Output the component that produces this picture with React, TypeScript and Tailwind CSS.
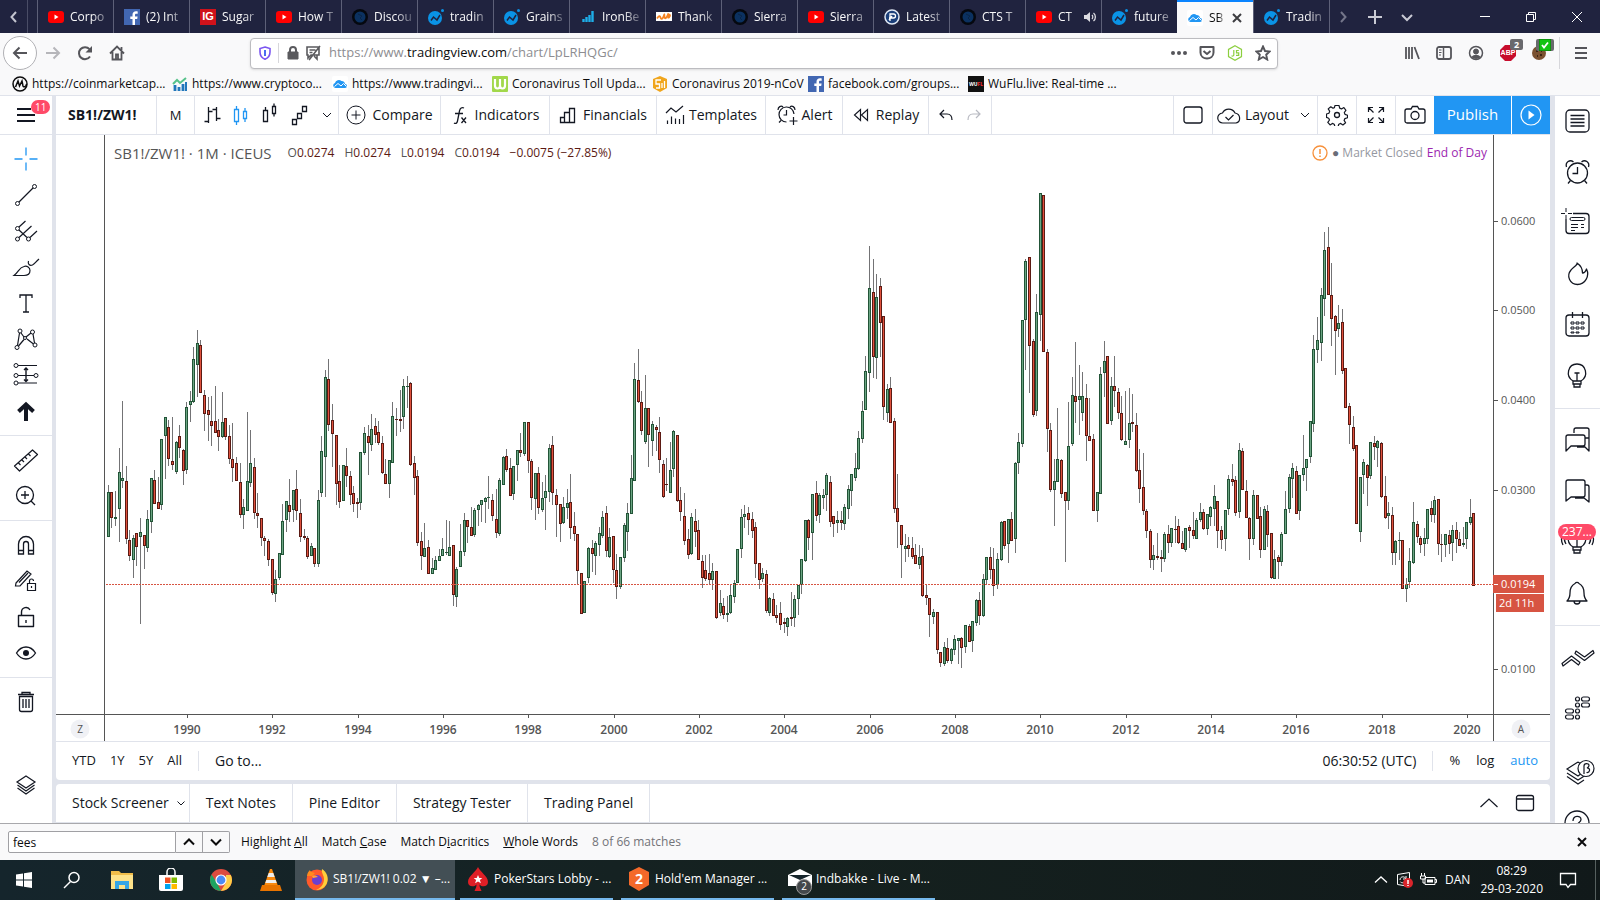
import { useState } from 'react';
import type { ReactNode } from 'react';

interface IconProps {
  size?: number;
  children: ReactNode;
  className?: string;
}

// Thin line icons, drawn on a square grid of `size` units
function Icon({ size = 28, children, className = '' }: IconProps) {
  return (
    <svg
      width={size}
      height={size}
      viewBox={`0 0 ${size} ${size}`}
      fill="none"
      stroke="currentColor"
      className={`shrink-0 ${className}`}
      aria-hidden="true"
    >
      {children}
    </svg>
  );
}

/* ---------- favicons ---------- */

const YouTubeIcon = () => (
  <Icon size={16}>
    <rect x="0" y="2" width="16" height="12" rx="3" fill="#f00" stroke="none" />
    <path d="M6.500 5.500v5l4-2.500z" fill="#fff" stroke="none" />
  </Icon>
);

const FacebookIcon = () => (
  <Icon size={16}>
    <rect width="16" height="16" fill="#4267b2" stroke="none" />
    <path d="M11 16V10h2.200l.4-2.500H11V6c0-.8.3-1.300 1.400-1.300h1.300V2.400C13.400 2.300 12.700 2.200 12 2.200 9.900 2.200 8.500 3.500 8.500 5.700v1.800H6.300V10h2.200v6z" fill="#fff" stroke="none" />
  </Icon>
);

const IgIcon = () => (
  <span className="flex size-4 shrink-0 items-center justify-center bg-[#d0121b] font-['Liberation_Sans',sans-serif] text-[11px] font-bold text-white">
    IG
  </span>
);

const OrbIcon = () => (
  <Icon size={16}>
    <circle cx="8" cy="8" r="8" fill="#05080f" stroke="none" />
    <circle cx="8" cy="8" r="5.500" fill="#0b3160" stroke="none" />
    <path d="M6 5l4 2-2 2 2 2" stroke="#0a2547" />
  </Icon>
);

const WaveIcon = () => (
  <Icon size={16}>
    <circle cx="7" cy="9" r="7" fill="#0a93e6" stroke="none" />
    <circle cx="14.500" cy="1.500" r="1.500" fill="#0a93e6" stroke="none" />
    <path d="M3 11.500l2.500-3.500 3.500 3L12 6" stroke="#20233f" strokeWidth="1.500" />
  </Icon>
);

const BarsIcon = () => (
  <Icon size={16}>
    <path d="M3.500 13v-3M6.500 13V8M9.500 13V6M12.500 13V2" stroke="#1eaee8" strokeWidth="2.400" />
  </Icon>
);

const OrangeIcon = () => (
  <Icon size={16}>
    <rect y="3" width="16" height="9" fill="#fff" stroke="none" />
    <path d="M1 9.500c2-3 3-3 3.500-1s2 2 3-1 1-3 1 0 2 2 3-1l1-2v5M12 7c2-2 3-1 1 1.500" stroke="#f58220" strokeWidth="1.800" />
  </Icon>
);

const SealIcon = () => (
  <Icon size={16}>
    <circle cx="8" cy="8" r="7" fill="#1b3f7a" stroke="#dfe7f3" strokeWidth="1.500" />
    <path d="M6 12V5h3.500a2 2 0 010 4H5M8 7l-3 4" stroke="#fff" strokeWidth="1.300" />
  </Icon>
);

const CloudIcon = () => (
  <Icon size={16}>
    <rect width="16" height="16" rx="2" fill="#fff" stroke="none" />
    <path d="M3.500 12a2.500 2.500 0 01-.5-4.900A4 4 0 019.500 5a3.500 3.500 0 013.500 3 2 2 0 010 4z" fill="#2196f3" stroke="none" />
    <path d="M2.500 10.500l3.500-3 3 2.500 2.500-2.500 3 3" stroke="#fff" />
  </Icon>
);

/* ---------- browser chrome ---------- */

const TABS = [
  { title: 'Corpo', icon: <YouTubeIcon /> },
  { title: '(2) Int', icon: <FacebookIcon /> },
  { title: 'Sugar', icon: <IgIcon /> },
  { title: 'How T', icon: <YouTubeIcon /> },
  { title: 'Discou', icon: <OrbIcon /> },
  { title: 'tradin', icon: <WaveIcon /> },
  { title: 'Grains', icon: <WaveIcon /> },
  { title: 'IronBe', icon: <BarsIcon /> },
  { title: 'Thank', icon: <OrangeIcon /> },
  { title: 'Sierra', icon: <OrbIcon /> },
  { title: 'Sierra', icon: <YouTubeIcon /> },
  { title: 'Latest', icon: <SealIcon /> },
  { title: 'CTS T', icon: <OrbIcon /> },
  { title: 'CT', icon: <YouTubeIcon />, audio: true },
  { title: 'future', icon: <WaveIcon /> },
  { title: 'SB', icon: <CloudIcon />, active: true },
  { title: 'Tradin', icon: <WaveIcon /> },
];

const FADE = '[mask-image:linear-gradient(to_right,black_55%,rgba(0,0,0,0.2))]';

function TabBar() {
  return (
    <header className="flex h-[33px] shrink-0 items-stretch bg-[#20233f] text-xs text-[#f9f9fa]">
      <button aria-label="Scroll tabs left" className="flex w-7 items-center justify-center border-r border-[#4a4d66]">
        <Icon size={16}><path d="M10 3L5.500 8l4.500 5" strokeWidth="2" stroke="#c3c4cf" /></Icon>
      </button>
      <div className="ml-[9px] flex min-w-0">
        {TABS.map((tab, i) => (
          <div
            key={i}
            className={`flex w-[76px] shrink-0 items-center gap-1.5 pl-2.5 ${
              tab.active
                ? 'border-t-2 border-[#0a84ff] bg-[#f9f9fa] pr-2.5 text-[#0c0c0d]'
                : 'border-l border-[#5d6078] pr-1'
            }`}
          >
            {tab.icon}
            <span className={`flex-1 whitespace-nowrap ${FADE}`}>{tab.title}</span>
            {tab.audio && (
              <Icon size={14}>
                <path d="M1 5h2.500L7 2v10L3.500 9H1z" fill="#dcdce2" stroke="none" />
                <path d="M9 5c1 1 1 3 0 4M10.500 3c2.500 2 2.500 6 0 8" stroke="#dcdce2" strokeWidth="1.300" />
              </Icon>
            )}
            {tab.active && (
              <button aria-label="Close tab">
                <Icon size={12}><path d="M2 2l8 8M10 2l-8 8" stroke="#3c3c40" strokeWidth="2" /></Icon>
              </button>
            )}
          </div>
        ))}
        <div className="border-l border-[#5d6078]" />
      </div>
      <div className="flex items-center gap-4 pl-[5px]">
        <button aria-label="Scroll tabs right"><Icon size={16}><path d="M6 3l4.500 5L6 13" strokeWidth="2" stroke="#74768a" /></Icon></button>
        <button aria-label="New tab"><Icon size={16}><path d="M8 1v14M1 8h14" strokeWidth="2" stroke="#c9cad4" /></Icon></button>
        <button aria-label="List all tabs"><Icon size={16}><path d="M3 6l5 5 5-5" strokeWidth="2" stroke="#c9cad4" /></Icon></button>
      </div>
      <div className="ml-auto flex items-center">
        <button aria-label="Minimize" className="flex w-[46px] justify-center"><Icon size={12}><path d="M1 5.500h10" stroke="#fff" /></Icon></button>
        <button aria-label="Restore" className="flex w-[46px] justify-center"><Icon size={12}><path d="M1.500 3.500h7v7h-7zM3.500 3.500v-2h7v7h-2" stroke="#fff" /></Icon></button>
        <button aria-label="Close" className="flex w-[46px] justify-center"><Icon size={12}><path d="M1 1l10 10M11 1L1 11" stroke="#fff" /></Icon></button>
      </div>
    </header>
  );
}

function NavBar() {
  return (
    <div className="flex h-10 shrink-0 items-center bg-[#f9f9fa] text-[#55555a]">
      <div className="flex w-[250px] items-center pl-[3px]">
        <button aria-label="Back" className="flex size-[34px] items-center justify-center rounded-full border border-[#b1b1b5] bg-white">
          <Icon size={16}><path d="M15 8H2M7.500 2.500L2 8l5.500 5.500" strokeWidth="2" /></Icon>
        </button>
        <button aria-label="Forward" className="ml-2 text-[#b6b6ba]"><Icon size={16}><path d="M1 8h13M8.500 2.500L14 8l-5.500 5.500" strokeWidth="2" /></Icon></button>
        <button aria-label="Reload" className="ml-4">
          <Icon size={16}>
            <path d="M13 11.500A6 6 0 1112.500 4.200" strokeWidth="2" />
            <path d="M15 1v6.500H8.500z" fill="currentColor" stroke="none" />
          </Icon>
        </button>
        <button aria-label="Home" className="ml-4">
          <Icon size={16}><path d="M1 8.500l7-7 7 7M3.500 7v7.500h9V7M7 14V9.500h2V14M12.500 2v3" strokeWidth="1.800" /></Icon>
        </button>
      </div>
      <div className="flex h-[31px] max-w-[1028px] flex-1 items-center rounded-sm border border-[#bcbcc0] bg-white pr-1.5 pl-[7px] shadow-sm">
        <Icon size={14}>
          <path d="M7 1l5 1.500V6c0 3.500-2 6-5 7.300C4 12 2 9.500 2 6V2.500z" stroke="#7a55f0" strokeWidth="1.600" />
          <path d="M7 4v6" stroke="#4b6cf2" strokeWidth="2" />
        </Icon>
        <div className="mx-1.5 h-5 w-px bg-[#d7d7db]" />
        <div className="flex items-center gap-1">
          <Icon size={16}><path d="M3 7h10v7H3z" fill="#5a5a5e" stroke="#5a5a5e" /><path d="M5 7V5a3 3 0 016 0v2" strokeWidth="2" stroke="#5a5a5e" /></Icon>
          <Icon size={16}><path d="M2 2h12v8H6l-3 3v-3H2zM4.500 5h6M4.500 7.500h3M15 1L4 15M12 10v4l-3-3" strokeWidth="1.600" stroke="#5a5a5e" /></Icon>
        </div>
        <label className="sr-only" htmlFor="url">Address</label>
        <div className="relative ml-2 min-w-0 flex-1 text-[13px] whitespace-nowrap text-[#8d8d91]">
          <input id="url" className="absolute inset-0 w-full bg-transparent outline-none" />
          https://www.<span className="text-[#0c0c0d]">tradingview.com</span>/chart/LpLRHQGc/
        </div>
        <div className="flex items-center gap-3">
          <button aria-label="Page actions"><Icon size={16}><circle cx="2" cy="8" r="2" fill="currentColor" stroke="none" /><circle cx="8" cy="8" r="2" fill="currentColor" stroke="none" /><circle cx="14" cy="8" r="2" fill="currentColor" stroke="none" /></Icon></button>
          <button aria-label="Save to Pocket"><Icon size={16}><path d="M1.500 2h13v5.500c0 8-13 8-13 0zM4.500 6l3.500 3 3.500-3" strokeWidth="2" strokeLinejoin="round" /></Icon></button>
          <button aria-label="JavaScript" className="text-[#8ccf3f]">
            <Icon size={16}><path d="M8 .7l6.500 3.700v7.200L8 15.300 1.500 11.600V4.400z" strokeWidth="1.200" /><path d="M6.800 5v5c0 1.200-1.500 1.200-2.300.8M11.800 5.500H9.500v2.300h2.200v2.500H9" strokeWidth="1.200" /></Icon>
          </button>
          <button aria-label="Bookmark page"><Icon size={16}><path d="M8 1.500l2 4.500 4.700.5-3.500 3.200 1 4.800L8 12l-4.200 2.500 1-4.800L1.300 6.500 6 6z" strokeWidth="1.900" /></Icon></button>
        </div>
      </div>
      <div className="ml-auto flex items-center gap-4 pr-[11px]">
        <button aria-label="Library"><Icon size={16}><path d="M2 2v12M5 2v12M8 2v12M10.500 2l4.500 12" strokeWidth="1.800" /></Icon></button>
        <button aria-label="Sidebars"><Icon size={16}><rect x="1" y="2" width="14" height="12" rx="2" strokeWidth="1.800" /><path d="M7.500 2v12" strokeWidth="1.500" /><path d="M3 5h2.500M3 7.500h2.500M3 10h2" /></Icon></button>
        <button aria-label="Account"><Icon size={16}><circle cx="8" cy="8" r="6.500" strokeWidth="1.500" /><circle cx="8" cy="6.500" r="2.500" fill="currentColor" /><path d="M3.500 12c2-3 7-3 9 0-2 2.500-7 2.500-9 0z" fill="currentColor" stroke="none" /></Icon></button>
        <button aria-label="Adblock Plus" className="relative flex size-4 items-center justify-center">
          <Icon size={16} className="absolute"><path d="M5 0h6l5 5v6l-5 5H5l-5-5V5z" fill="#c70d2c" stroke="none" /></Icon>
          <span className="relative font-['Liberation_Sans',sans-serif] text-[7px] font-bold text-white">ABP</span>
          <span className="absolute -top-1.5 left-2.5 rounded-xs bg-[#69696d] px-1 text-[9px] leading-[11px] font-bold text-white">2</span>
        </button>
        <button aria-label="Cookie manager" className="relative">
          <Icon size={16}><circle cx="7" cy="8" r="7" fill="#7b5231" stroke="none" /><path d="M4 6h2M8 10h2M5 11h1M9 6h1" stroke="#3d2614" strokeWidth="2" /></Icon>
          <span className="absolute -top-1.5 left-1 flex rounded-xs bg-[#69696d] px-[3px]">
            <Icon size={12}><rect width="12" height="12" fill="#12c412" stroke="#0a6b0a" /><path d="M3 6l2 2.500 4-5" stroke="#fff" strokeWidth="1.800" /></Icon>
          </span>
        </button>
        <div className="-mr-[3px] -ml-[5px] h-8 w-px bg-[#d7d7db]" />
        <button aria-label="Menu"><Icon size={16}><path d="M2 3h12M2 8h12M2 13h12" strokeWidth="2" /></Icon></button>
      </div>
    </div>
  );
}

const BOOKMARKS = [
  {
    label: 'https://coinmarketcap...',
    icon: <Icon size={16}><circle cx="8" cy="8" r="7" strokeWidth="1.500" /><path d="M3.500 11l2.500-6 1.500 5 2.500-5 1 5c.5 1.500 3 1 3.500-2" strokeWidth="1.500" /></Icon>,
  },
  {
    label: 'https://www.cryptoco...',
    icon: <Icon size={16}><path d="M3 15V9M7 15v-4M11 15V8" stroke="#2277bb" strokeWidth="2.800" /><path d="M14 15V6" stroke="#2277bb" strokeWidth="2" /><path d="M1 8l4-4 3 3 6-5" stroke="#56c28a" strokeWidth="2" /></Icon>,
  },
  { label: 'https://www.tradingvi...', icon: <CloudIcon /> },
  {
    label: 'Coronavirus Toll Upda...',
    icon: <Icon size={16}><rect width="16" height="16" rx="1" fill="#a2d84b" stroke="none" /><path d="M3 3v6.500c0 4 5 4 5 0V3v6.500c0 4 5 4 5 0V3" stroke="#fff" strokeWidth="2.200" /></Icon>,
  },
  {
    label: 'Coronavirus 2019-nCoV',
    icon: <Icon size={16}><path d="M8 0l7 3v9l-7 4-7-4V3z" fill="#f0a51c" stroke="none" /><path d="M9 4H4v4h3.500v4H4M10 7v5M12.500 5v7" stroke="#fff" strokeWidth="1.300" /></Icon>,
    narrow: true,
  },
  { label: 'facebook.com/groups...', icon: <FacebookIcon /> },
  {
    label: 'WuFlu.live: Real-time ...',
    icon: (
      <span className="flex size-4 shrink-0 items-center justify-center bg-[#111] text-[5px] font-bold text-white">
        WU<span className="text-red-500">FL</span>
      </span>
    ),
  },
];

function BookmarksBar() {
  return (
    <nav className="flex h-[23px] shrink-0 items-center border-b border-[#e0e3eb] bg-[#f9f9fa] text-xs text-[#0c0c0d]">
      {BOOKMARKS.map((b) => (
        <a key={b.label} href="#" className={`flex shrink-0 items-center gap-1 pl-3 whitespace-nowrap ${b.narrow ? 'w-39' : 'w-40'}`}>
          {b.icon}
          {b.label}
        </a>
      ))}
    </nav>
  );
}

/* ---------- trading toolbar ---------- */

const CELL = 'flex shrink-0 items-center justify-center border-r border-[#e0e3eb]';

function ChartToolbar() {
  return (
    <div className="flex h-[39px] shrink-0 items-stretch border-b border-[#e0e3eb] bg-white text-sm whitespace-nowrap">
      <button className={`${CELL} w-[101px] font-bold`}><span className="flex-1 pl-3 text-left">SB1!/ZW1!</span></button>
      <button className={`${CELL} w-[38px] text-[13px]`}>M</button>
      <div className={`${CELL} w-36`}>
        <button aria-label="Bars"><Icon><path d="M9.500 6v16M5.500 20.500h4M9.500 10.500h4M17.500 6v14M13.500 8.500h4M17.500 17.500h4" strokeWidth="1.300" /></Icon></button>
        <button aria-label="Candles" className="text-[#2196f3]"><Icon><path d="M7.500 8.500h4v12h-4zM9.500 5v3.500M9.500 20.500V24M16.500 10.500h3v7h-3zM18 7v3.500M18 17.500V21" strokeWidth="1.300" /></Icon></button>
        <button aria-label="Hollow candles"><Icon><path d="M8.500 9.500h4v11h-4zM10.500 6v3.500M17.500 5.500h3v7h-3zM19 2.500v3M19 12.500v3" strokeWidth="1.300" /></Icon></button>
        <button aria-label="Renko"><Icon><path d="M9.500 18.500h4v5h-4zM14.500 12.500h4v5h-4zM19.500 5.500h4v5h-4z" strokeWidth="1.300" /></Icon></button>
        <button aria-label="More chart types" className="ml-2"><Icon size={16}><path d="M4 6l4 4 4-4" /></Icon></button>
      </div>
      <button className={`${CELL} w-[102px] gap-1.5`}>
        <Icon size={20}><circle cx="10" cy="10" r="9" /><path d="M10 5.500v9M5.500 10h9" /></Icon>
        Compare
      </button>
      <button className={`${CELL} w-[109px] gap-1.5`}>
        <Icon size={18}><path d="M13 2c-2-1-4 0-4.500 3L6.500 15c-.5 2.500-2 3-3.500 2M4 7.500h8M10.500 11.500l4.500 5.500M15 11.500L10.500 17" strokeWidth="1.300" /></Icon>
        Indicators
      </button>
      <button className={`${CELL} w-[107px] gap-1.5`}>
        <Icon size={18}><path d="M1.500 11.500h4v5h-4zM5.500 6.500h5v10h-5zM10.500 2.500h5v14h-5z" strokeWidth="1.300" /></Icon>
        Financials
      </button>
      <button className={`${CELL} w-[109px] gap-1`}>
        <Icon size={20}><path d="M1 8l5-5 5 4 7-6M2.500 15.500V19M6.500 11.500V19M10.500 13.500V19M14.500 14v5M18.500 10v9" strokeWidth="1.200" /></Icon>
        Templates
      </button>
      <button className={`${CELL} w-[77px] gap-1`}>
        <Icon size={22}><path d="M18 10A7.500 7.500 0 1010.500 18M10.500 6v5h-3M2 6c0-3 3-5 5-3M19 6c0-3-3-5-5-3M5 16.500l-2 2M17.500 13v8M13.500 17h8" strokeWidth="1.200" /></Icon>
        Alert
      </button>
      <button className={`${CELL} w-[86px] gap-1.5`}>
        <Icon size={18}><path d="M8.500 3.500v11l-6-5.500zM15.500 3.500v11l-6-5.500z" strokeWidth="1.200" /></Icon>
        Replay
      </button>
      <div className={`${CELL} w-[63px] gap-3`}>
        <button aria-label="Undo"><Icon size={16}><path d="M6 3L2 7l4 4M2 7h7c3 0 5 2 5 6" strokeWidth="1.200" /></Icon></button>
        <button aria-label="Redo" className="text-[#b8bac2]"><Icon size={16}><path d="M10 3l4 4-4 4M14 7H7c-3 0-5 2-5 6" strokeWidth="1.200" /></Icon></button>
      </div>
      <div className="ml-auto flex border-l border-[#e0e3eb]">
        <button aria-label="Select layout" className={`${CELL} w-[39px]`}><Icon size={20}><rect x="1" y="2" width="18" height="16" rx="2.500" strokeWidth="1.300" /></Icon></button>
        <button className={`${CELL} w-[105px] gap-1`}>
          <Icon size={24}><path d="M6 20a5 5 0 01-.5-10A7 7 0 0118 10c6 1 6 9 1 10zM8.500 14l3 3 5-5" strokeWidth="1.200" /></Icon>
          Layout
          <Icon size={16} className="ml-1"><path d="M4 6l4 4 4-4" /></Icon>
        </button>
        <button aria-label="Settings" className={`${CELL} w-[39px]`}>
          <Icon size={22}><path d="M9 1.500h4l.7 2.600 1.800.8 2.400-1.400 2 2.800-1.600 2.200.7 1.900 2.500.8v2.600l-2.600.8-.8 1.800 1.500 2.400-2.700 2.200-2.200-1.600-1.900.8-.8 2.600H9l-.8-2.600-1.800-.8-2.300 1.500-2.300-2.600 1.700-2.300-.8-1.800-2.200-.8V10l2.400-.8.8-1.900-1.500-2.400 2.600-2.100 2.200 1.400 1.400-.6z" strokeWidth="1.200" strokeLinejoin="round" /><circle cx="11" cy="11" r="2.500" strokeWidth="1.300" /></Icon>
        </button>
        <button aria-label="Fullscreen" className={`${CELL} w-[39px]`}>
          <Icon size={20}><path d="M2.500 7V2.500H7M2.500 2.500L7.500 7.500M13 2.500h4.500V7M17.500 2.500l-5 5M2.500 13v4.500H7M2.500 17.500l5-5M17.500 13v4.500H13M17.500 17.500l-5-5" strokeWidth="1.200" /></Icon>
        </button>
        <button aria-label="Take a snapshot" className="flex w-[38px] items-center justify-center">
          <Icon size={22}><path d="M3 5h4l1.500-2.500h5L15 5h4a2 2 0 012 2v10a2 2 0 01-2 2H3a2 2 0 01-2-2V7a2 2 0 012-2z" strokeWidth="1.300" /><circle cx="11" cy="11.500" r="4" strokeWidth="1.300" /></Icon>
        </button>
        <button className="w-[78px] border-r border-white bg-[#2196f3] text-[15px] text-white">Publish</button>
        <button aria-label="Play" className="flex w-[38px] items-center justify-center bg-[#2196f3] text-white">
          <Icon size={22}><circle cx="11" cy="11" r="10" strokeWidth="1.200" /><path d="M8.500 6.500v9L14.500 11z" fill="currentColor" stroke="none" /></Icon>
        </button>
      </div>
    </div>
  );
}

const DRAW_TOOLS = [
  { name: 'Crosshair', active: true, art: <path d="M14 2.500v8M14 17.500v8M2.500 14h8M17.500 14h8" strokeWidth="1.300" /> },
  { name: 'Trend line', art: <><circle cx="5.500" cy="22.500" r="2" /><circle cx="22.500" cy="5.500" r="2" /><path d="M7 21L21 7" strokeWidth="1.200" /></> },
  { name: 'Pitchfork', art: <><circle cx="5.500" cy="11.500" r="2" /><circle cx="5.500" cy="22" r="2" /><circle cx="16.500" cy="22" r="2" /><path d="M7 10l6.500-6M7 20.500L19.500 9M18 20.500l7-6.500M7 13l8 7.500" strokeWidth="1.200" /></> },
  { name: 'Brush', art: <path d="M2 22.500h10c4 0 6-2 6-5s-3-5-6-4c-5 1-5 5-10 9zM16.500 8c-1 3 1 5 4 4 2-.7 3-3 6.500-6" strokeWidth="1.200" /> },
  { name: 'Text', art: <path d="M8 9V6h12v3M14 6v17M11 23h6" strokeWidth="1.300" /> },
  { name: 'Pattern', art: <><circle cx="8" cy="6" r="2" /><circle cx="20.500" cy="7" r="2" /><circle cx="5" cy="22.500" r="2" /><circle cx="23" cy="20" r="2" /><circle cx="13" cy="13" r="1.500" /><path d="M7.500 8L5.500 20.500M9 8l3 4M14 12l5-4M12 14.500l-5.500 6.500M15 14l6.500 5M21 9l1.500 9" strokeWidth="1.200" /></> },
  { name: 'Forecast', art: <><circle cx="4" cy="4.500" r="2" /><circle cx="24" cy="14.500" r="2" /><circle cx="4" cy="14.500" r="2" /><circle cx="4" cy="22" r="2" /><path d="M6 4.500h19M6 14.500h16M6 22h19" strokeWidth="1.200" /><path d="M14 7.500v13M12 9l2-2 2 2M12 18.500l2 2 2-2" strokeWidth="1.400" /></> },
  { name: 'Arrow', art: <path d="M14 24V8M6.500 14.500L14 7.500l7.500 7" strokeWidth="4" /> },
];

const MEASURE_TOOLS = [
  { name: 'Measure', art: <path d="M2.500 20L20.500 4l5 4.500L7.500 25zM6.500 17l2 2M10 14l2 2M13 11l2 2M16.500 8l2 2" strokeWidth="1.200" strokeLinejoin="round" /> },
  { name: 'Zoom in', art: <><circle cx="13" cy="13" r="8.500" strokeWidth="1.300" /><path d="M13 9v8M9 13h8M19 19l4 4" strokeWidth="1.300" /></> },
];

const LOCK_TOOLS = [
  { name: 'Magnet', art: <path d="M6.500 23V13a7.500 7.500 0 0115 0v10h-5V13a2.500 2.500 0 00-5 0v10zM6.500 19.500h5M16.500 19.500h5" strokeWidth="1.300" /> },
  { name: 'Stay in drawing mode', art: <path d="M4 16L15 4l4 3L8 19H3.500zM7 15.500l9-9.500M15.500 16.500h8v7h-8zM17.500 16.500v-2.500a2 2 0 014 0M19.500 19v2" strokeWidth="1.200" /> },
  { name: 'Lock all drawings', art: <path d="M6.500 12.500h15v11h-15zM9.500 12.500V9a4.500 4.500 0 018.500-2M14 17v3" strokeWidth="1.400" strokeLinejoin="round" /> },
  { name: 'Hide all drawings', art: <><path d="M4.500 14c5-8 14-8 19 0-5 8-14 8-19 0z" strokeWidth="1.300" /><circle cx="14" cy="14" r="3" fill="currentColor" stroke="none" /></> },
];

const LAYERS_ART = <path d="M14 5l9 6-9 6-9-6zM5.500 14l8.500 6 8.500-6M5.500 17l8.500 6 8.500-6" strokeWidth="1.200" />;

interface Tool {
  name: string;
  art: ReactNode;
  active?: boolean;
}

function ToolGroup({ tools }: { tools: Tool[] }) {
  return (
    <div className="flex flex-col border-b border-[#e0e3eb] py-1.5">
      {tools.map((tool) => (
        <button
          key={tool.name}
          aria-label={tool.name}
          className={`flex h-9 items-center justify-center ${tool.active ? 'text-[#2196f3]' : ''}`}
        >
          <Icon>{tool.art}</Icon>
        </button>
      ))}
    </div>
  );
}

function LeftSidebar() {
  return (
    <aside className="flex w-[52px] shrink-0 flex-col bg-white">
      <button aria-label="Open menu" className="relative flex h-[39px] items-center justify-center border-b border-[#e0e3eb]">
        <Icon size={20}><path d="M1 4h14M1 10h18M1 16h18" strokeWidth="2" /></Icon>
        <span className="absolute top-1 left-[31px] rounded-full bg-[#ff4a68] px-1 text-[10px] leading-3.5 text-white">11</span>
      </button>
      <ToolGroup tools={DRAW_TOOLS} />
      <ToolGroup tools={MEASURE_TOOLS} />
      <ToolGroup tools={LOCK_TOOLS} />
      <div className="flex flex-1 flex-col justify-between pt-1.5 pb-5">
        <button aria-label="Remove drawings" className="flex h-9 items-center justify-center">
          <Icon><path d="M7.500 8.500h13v13a2 2 0 01-2 2h-9a2 2 0 01-2-2zM6 6.500h16M10 6V4.500h8V6M11 11v9M14 11v9M17 11v9" strokeWidth="1.300" /></Icon>
        </button>
        <button aria-label="Object tree" className="flex h-9 items-center justify-center"><Icon>{LAYERS_ART}</Icon></button>
      </div>
    </aside>
  );
}

const PANEL_TOP: Tool[] = [
  { name: 'Watchlist', art: <><rect x="4" y="4" width="23" height="22" rx="4" strokeWidth="1.300" /><path d="M8.500 9.500h14M8.500 13h14M8.500 16.500h14M8.500 20h14" strokeWidth="1.300" /></> },
  { name: 'Alerts', art: <><circle cx="15.500" cy="16" r="10" strokeWidth="1.300" /><path d="M15.500 10v6.500h-5M4.500 10C3 5 8 2 11.500 5M26.500 10C28 5 23 2 19.500 5M8.500 23.500L6 26.500M22.500 23.500l2.500 3" strokeWidth="1.300" /></> },
  { name: 'Data window', art: <><path d="M11 5.500h13a3 3 0 013 3v14a3 3 0 01-3 3H7a3 3 0 01-3-3V11" strokeWidth="1.300" /><path d="M4 0v4M4 7v4M-1 5.500h4M6 5.500h4" /><rect x="8" y="9.500" width="15" height="3" rx="1.500" /><path d="M9 16.500h7M19 16.500h3M9 19.500h7M19 19.500h3M9 22.500h4" strokeWidth="1.200" /></> },
  { name: 'Hotlists', art: <path d="M15 4c1 2-4 4-6 7-5 6-1 14.500 6.500 14.500S28 17 24.500 10c-1 3-3 4-4 4 0-4-1-7-5.500-10z" strokeWidth="1.300" strokeLinejoin="round" /> },
  { name: 'Calendar', art: <><rect x="4" y="5" width="23" height="21" rx="3" strokeWidth="1.300" /><path d="M10.500 2v6M20.500 2v6" strokeWidth="1.300" /><path d="M9 12h3v2H9zM14 12h3v2h-3zM19 12h3v2h-3zM9 17h3v2H9zM14 17h3v2h-3zM19 17h3v2h-3zM9 22h3v1H9zM14 22h3v1h-3z" strokeLinejoin="round" /></> },
  { name: 'Ideas', art: <path d="M11 20c-8-5-5-17 4-17s12 12 4 17zM11 20v3h8v-3M12 23v3h6v-3M12.500 12h5M15 12v8" strokeWidth="1.300" /> },
];

const PANEL_MIDDLE: Tool[] = [
  { name: 'Public chats', art: <path d="M12 8V5a2 2 0 012-2h11a2 2 0 012 2v21l-4-4h-8M4 12a2 2 0 012-2h15a2 2 0 012 2v7a2 2 0 01-2 2H9l-5 5zM23 13h4" strokeWidth="1.300" strokeLinejoin="round" /> },
  { name: 'Private chats', art: <path d="M4 6a2 2 0 012-2h15a2 2 0 012 2v13a2 2 0 01-2 2H9l-5 4zM23 9h2a2 2 0 012 2v15l-5-4h-9" strokeWidth="1.300" strokeLinejoin="round" /> },
  { name: 'Ideas stream', art: <path d="M11 20c-8-5-5-17 4-17s12 12 4 17zM11 20v3h8v-3M12 23v3h6v-3M12.500 12h5M15 12v8M4 17c-2-3-2-6 0-9M1 18c-2-4-2-8 0-11M27 17c2-3 2-6 0-9M30 18c2-4 2-8 0-11" strokeWidth="1.300" /> },
  { name: 'Notifications', art: <path d="M5 23h20c-2-2-3-4-3-8 0-5-2-8-5-9.500-1-1.500-3-1.500-4 0C10 7 8 10 8 15c0 4-1 6-3 8zM12 23c0 4 6 4 6 0" strokeWidth="1.300" strokeLinejoin="round" /> },
];

const PANEL_BOTTOM: Tool[] = [
  { name: 'Order panel', art: <path d="M0 21.500L9.500 14l8.500 6.500-1.500 2.500-7-5.500L1 24zM14 9l8.500 6L31 8.500l1 2.500-9.500 7.500-9.500-7z" strokeWidth="1.200" strokeLinejoin="round" /> },
  {
    name: 'DOM',
    art: (
      <g strokeWidth="1.200">
        <rect x="19.500" y="4" width="8" height="4" rx="2" />
        <rect x="19.500" y="10" width="8" height="4" rx="2" />
        <rect x="13.500" y="4" width="4" height="4" rx="2" />
        <rect x="13.500" y="10" width="4" height="4" rx="2" />
        <rect x="13.500" y="16" width="4" height="4" rx="2" />
        <rect x="13.500" y="22" width="4" height="4" rx="2" />
        <rect x="3.500" y="16" width="8" height="4" rx="2" />
        <rect x="3.500" y="22" width="8" height="4" rx="2" />
      </g>
    ),
  },
];

function PanelButton({ tool }: { tool: Tool }) {
  return (
    <button aria-label={tool.name} className="flex h-[51px] shrink-0 items-center justify-center pr-0.5 pb-0.5">
      <Icon size={30} className="overflow-visible">{tool.art}</Icon>
    </button>
  );
}

function RightSidebar() {
  return (
    <aside className="flex w-[45px] shrink-0 flex-col overflow-hidden bg-white">
      <div className="flex shrink-0 flex-col border-b border-[#e0e3eb] pb-1.5">
        {PANEL_TOP.map((t) => <PanelButton key={t.name} tool={t} />)}
      </div>
      <div className="relative flex shrink-0 flex-col border-b border-[#e0e3eb] py-1.5">
        {PANEL_MIDDLE.map((t) => <PanelButton key={t.name} tool={t} />)}
        <span className="absolute top-[115px] right-1 rounded-full bg-[#ff4a68] px-1 text-[12px] leading-4 text-white">237...</span>
      </div>
      <div className="flex shrink-0 flex-col pt-1.5">
        {PANEL_BOTTOM.map((t) => <PanelButton key={t.name} tool={t} />)}
      </div>
      <div className="mt-3 flex flex-col">
        <PanelButton tool={{
          name: 'Object tree',
          art: <><path d="M16 6L5 13l11 7 4-3M5 17l11 7 8-5M5 20.500L16 28l6-4M16 6l3 2" strokeWidth="1.200" /><circle cx="24" cy="12.500" r="8" strokeWidth="1.200" fill="#fff" /><path d="M22 18v-8c0-3 5-3 5-.5 0 1.500-1 2-2 2.500 4 0 3 5-.5 4.500" strokeWidth="1.200" /></>,
        }} />
        <PanelButton tool={{
          name: 'Help',
          art: <><circle cx="15" cy="16" r="12" strokeWidth="1.300" /><path d="M11 14c0-6 8-6 8-1.500 0 3-4 3-4 6.500M15 21v2" strokeWidth="1.300" /></>,
        }} />
      </div>
    </aside>
  );
}

/* ---------- price chart ---------- */

// Each segment keeps its candles relative to its own origin, in thirds of a unit:
// direction + x, high, body top, body bottom, low
const SEGMENTS = [
  {
    x: 100,
    y: 310,
    bars: `u25 525 546 681 681,d34 546 546 624 654,u46 543 621 627 648,u58 414 486 597 696,u67 273 504 513 534,d79 468 513 687 702,
d88 660 690 738 753,u100 675 684 750 804,d109 669 669 711 768,u121 624 666 681 942,d133 675 675 708 777,u142 600 627 714 726,
u154 504 504 636 669,d163 480 510 582 582,d175 501 576 597 597,u184 387 387 585 600,u196 321 321 378 507,d205 330 351 447 468,
d217 321 453 465 480,u229 393 396 486 492,d238 345 378 414 444,d250 417 420 483 525,u259 276 291 480 492,u271 243 273 285 336,
u280 111 147 276 279,u292 60 99 165 261,d301 90 105 249 249,d313 240 255 312 363,d325 261 300 315 393,d334 258 333 348 408,
d346 228 333 369 369,d355 327 360 381 423,u367 246 336 381 384,d376 324 324 381 390,d388 345 378 447 462,d397 339 447 474 516,
d409 441 459 513 513,d421 459 516 615 624,u430 567 591 615 657,u442 306 513 603 603,u451 360 459 519 531,d463 444 471 609 627,
d472 549 609 618 654,d484 624 624 684 708,d493 678 684 693 738,d505 687 693 750 768,d517 747 747 849 855,u526 780 807 852 876,
u538 729 729 804 810,u547 582 633 735 735,u559 573 573 630 666,d568 507 585 606 636,u580 540 540 600 636,d589 480 537 603 630,
d601 567 609 681 696,d613 657 678 684 690,d622 678 684 741 747,u634 699 708 738 738,d643 714 714 762 771,u655 540 570 762 771,
u664 378 423 549 561,u676 180 201 441 561,d685 147 207 345 363,d697 282 330 372 471,d709 375 375 522 585,d718 465 513 576 594,
u730 465 465 573 573,d739 414 468 498 531,d751 483 498 555 585,d760 528 549 582 606,d772 564 576 582 624,u781 426 426 579 600,
u793 351 369 429 435,d805 345 378 399 495,u814 312 357 405 423,d826 324 348 375 399,d835 333 366 399 405,d847 378 399 489 492,
d856 447 492 522 522,u868 450 450 522 564,u877 276 318 459 459,d889 294 327 330 378,d901 240 327 333 366,u910 207 228 321 357,
u922 198 228 231 294,d931 216 219 465 468,d943 438 459 504 555,d952 480 498 699 708,d964 666 693 738 780,u973 639 714 741 741,
d985 690 711 792 792,u997 744 774 792 792,u1006 738 750 780 780,u1018 717 738 753 753,u1027 684 717 738 738,u1039 630 726 729 735,
u1048 633 711 738 738,d1060 705 705 855 888,u1069 771 777 861 891,u1081 642 723 771 771,u1093 609 630 726 738,d1102 630 630 651 699,
d1114 591 651 678 678,u1123 594 600 675 681,u1135 582 585 600 648,u1144 570 570 585 636`,
  },
  {
    x: 480,
    y: 310,
    bars: `u16 561 564 576 639,u25 498 561 564 597,d37 552 570 618 633,d49 537 627 669 684,u58 504 510 672 678,u70 438 441 525 525,
d79 417 438 480 486,d91 444 474 558 558,u100 468 468 552 570,u112 420 420 465 513,d121 369 420 429 441,u133 336 336 432 438,
d145 336 336 453 489,d154 447 453 564 600,u166 489 489 567 630,d175 471 489 594 612,u187 516 564 600 606,u196 495 543 564 660,
u208 402 414 546 576,d217 378 405 549 585,d229 537 555 585 681,d241 582 582 642 696,u250 561 591 639 642,u262 537 579 594 627,
d271 492 576 654 687,d283 606 648 672 693,d292 672 672 783 825,d304 789 789 912 912,u313 813 813 909 909,u325 711 714 804 819,
d337 690 714 732 786,u346 693 699 738 795,u358 651 669 705 738,u367 603 621 678 684,d379 588 609 723 741,u388 654 681 741 744,
d400 678 678 780 819,d409 732 780 831 867,u421 741 741 831 837,u433 639 645 744 756,u442 579 609 666 723,u454 435 504 612 612,
u463 159 207 513 513,d475 117 210 276 279,d484 243 276 363 375,u496 195 294 396 402,d505 294 294 375 471,u517 333 342 393 438,
d529 345 351 360 423,d538 321 366 450 489,d550 450 462 561 564,d559 444 522 525 543,u571 396 480 549 549,u580 360 363 477 501,
d592 375 375 573 576,d601 531 570 606 633,d613 549 618 693 705,d625 657 687 735 747,u634 609 621 732 735,d646 597 633 666 711,
d655 630 660 750 750,d667 735 753 804 834,d676 735 780 807 813,d688 732 789 810 822,u697 759 783 810 840,d709 783 783 924 927,
u721 840 879 909 918,d730 864 888 915 927,u742 858 909 915 936,u751 825 855 909 912,u763 810 819 861 879,u772 717 717 819 819,
u784 597 621 717 744,u793 585 612 621 654,d805 591 609 630 675,d817 606 627 663 684,d826 636 651 762 804,d838 759 759 810 837,
u847 774 789 807 816,d859 780 792 903 909,u868 861 864 909 918,d880 849 867 918 918,d889 885 915 924 939,d901 876 909 945 960,
d913 924 936 942 969,u922 921 924 951 978,d934 846 921 927 948,u943 855 867 924 951,u955 825 825 867 915,u964 747 747 825 852,
u976 630 630 753 756,d985 627 630 684 720,u997 552 552 669 750,d1009 513 549 618 633,u1018 549 555 615 639,u1030 537 555 564 597,
u1039 489 495 555 603,d1051 498 516 636 651,d1060 618 618 642 681,u1072 603 630 639 669,d1084 603 630 639 660,u1093 582 591 642 660,
u1105 525 537 597 627,u1114 492 492 543 588`,
  },
  {
    x: 850,
    y: 180,
    bars: `u16 819 864 894 903,u25 753 774 867 870,u37 663 693 777 789,u46 528 573 690 690,u58 198 324 579 636,d70 237 336 531 594,
u79 282 351 534 597,d91 294 318 429 531,d100 408 408 681 720,u112 612 627 699 726,d121 591 624 729 729,d133 714 723 987 999,
d142 882 984 1026 1104,d154 1035 1035 1095 1194,u166 1062 1098 1107 1146,d175 1071 1095 1107 1131,d187 1071 1104 1131 1137,
d196 1092 1125 1152 1152,u208 1095 1131 1155 1167,d217 1104 1128 1248 1251,d229 1215 1245 1254 1275,d238 1254 1254 1305 1371,
u250 1287 1296 1311 1332,d262 1296 1296 1410 1422,d271 1416 1416 1449 1461,u283 1386 1401 1452 1458,d292 1374 1404 1443 1449,
u304 1404 1407 1443 1452,u313 1365 1377 1410 1425,u325 1374 1374 1383 1452,d334 1371 1374 1404 1464,u346 1335 1335 1401 1419,
d358 1332 1338 1386 1386,u367 1323 1323 1383 1416,u379 1257 1260 1329 1338,d388 1236 1260 1308 1335,u400 1182 1197 1308 1311,
u409 1131 1131 1200 1215,d421 1101 1131 1170 1197,d430 1104 1167 1218 1248,u442 1119 1137 1215 1227,u454 1023 1026 1140 1143,
d463 1023 1023 1098 1107,u475 1017 1017 1092 1149,d484 996 1017 1083 1083,u496 846 849 1077 1119,u505 759 786 849 882,
u517 420 420 792 801,u526 237 243 420 570,d538 231 231 498 639,d550 477 483 705 711,u559 342 396 693 708,u571 39 39 405 483,
d580 45 45 516 516,d592 507 516 747 816,d601 729 750 930 936,u613 837 903 930 1038,u622 684 837 906 906,d634 837 840 942 954,
d646 936 936 963 1146,u655 666 798 963 990,u667 591 645 792 798,d676 486 648 666 729,u688 555 648 660 765,u697 576 648 699 723,
d709 612 654 768 843,d718 654 768 783 783,d730 762 777 993 993,u742 936 936 993 1026,u751 561 582 942 942,u763 483 543 579 651,
d772 528 528 732 732,u784 591 618 723 735,d793 528 618 633 681,d805 624 636 699 717,d814 648 699 780 783,u826 633 783 795 795,
u838 624 729 780 804,d847 642 726 732 756,d859 699 735 873 876,d868 807 870 927 969,d880 819 921 993 1005,d889 987 993 1053 1074,
d901 1047 1053 1140 1164,u910 1095 1125 1140 1170,d922 1059 1128 1134 1140,d934 1110 1131 1137 1176,u943 1056 1062 1137 1146,
d955 1035 1062 1089 1119,u964 1044 1044 1089 1101`,
  },
  {
    x: 1170,
    y: 210,
    bars: `d16 918 957 960 999,d25 927 948 999 1002,d37 963 999 1017 1017,u46 954 954 1020 1026,d58 945 951 963 1014,d70 906 960 978 987,
u79 924 930 987 987,u91 879 906 930 936,d100 897 906 957 960,u112 912 912 957 975,u121 888 891 921 948,u133 825 858 897 948,
d142 873 873 963 1014,d154 948 960 990 1017,u166 900 900 987 1023,u175 795 807 897 915,d187 762 807 816 828,d196 798 810 909 918,
u208 699 720 906 924,d217 714 723 840 840,d229 810 843 924 924,d238 921 924 987 1050,u250 840 855 987 1005,d262 855 855 927 927,
d271 891 918 1020 1044,u283 888 897 1020 1020,d292 885 903 975 1011,d304 969 969 1104 1107,u313 1020 1047 1107 1107,
d325 1035 1041 1056 1107,u334 966 972 1056 1068,u346 843 897 972 972,u358 792 801 897 909,u367 759 774 807 864,d379 768 783 912 912,
u388 795 795 903 930,u400 675 774 795 813,u409 747 747 774 843,u421 633 633 741 759,u430 375 417 642 666,u442 321 390 420 459,
u454 234 255 399 453,u463 66 120 267 318,d475 51 111 255 255,d484 159 255 327 408,d496 315 318 363 495,u505 285 339 357 381,
d517 297 336 483 492,d526 474 474 594 594,d538 579 588 645 702,d550 618 651 717 723,d559 705 705 942 942,u571 801 801 966 996,
u580 747 756 795 852,d592 762 765 804 888,u601 696 696 798 807,d613 678 699 711 750,u622 690 693 714 771,d634 696 699 861 864,
d646 798 858 924 927,u655 876 909 918 957,d667 891 915 1029 1065,u676 990 993 1029 1065,u688 966 990 993 1050,d697 990 990 1137 1137,
u709 1104 1122 1137 1176,u718 1014 1053 1116 1134,u730 876 936 1059 1062,d742 933 942 981 999,d751 978 984 1005 1029,
u763 954 984 1002 1038,u772 897 897 987 1002,d784 873 894 915 936,u793 858 870 915 939,d805 867 867 1002 1035,d814 972 1002 1005 1056,
u826 972 972 1005 1041,d838 960 975 1002 1032,u847 945 960 999 1053,d859 936 960 987 1029,d868 966 987 1008 1008,u880 951 999 1005 1011,
u889 936 936 987 1017,u901 867 921 939 945,d910 909 909 1128 1128`,
  },
];

const CANDLES = SEGMENTS.flatMap((seg) =>
  seg.bars.split(',').map((row) => {
    const bar = row.trim();
    const [x, high, top, bottom, low] = bar.slice(1).split(' ').map(Number);
    const toY = (v: number) => seg.y + Math.round(v / 3);
    return {
      up: bar[0] === 'u',
      x: seg.x + Math.round((x - 1) / 3),
      high: toY(high),
      top: toY(top),
      bottom: toY(bottom),
      low: toY(low),
    };
  })
);

const PRICES = [
  { y: 221, label: '0.0600' },
  { y: 310, label: '0.0500' },
  { y: 400, label: '0.0400' },
  { y: 490, label: '0.0300' },
  { y: 669, label: '0.0100' },
];

const YEARS = Array.from({ length: 16 }, (_, i) => ({
  year: 1990 + i * 2,
  x: Math.round(187 + (i * 1280) / 15),
}));

function PriceChart() {
  return (
    <svg viewBox="56 135 1494 606" preserveAspectRatio="none" className="block h-full w-full font-['Open_Sans',sans-serif]">
      <g shapeRendering="crispEdges">
        {CANDLES.map((c) => (
          <g key={c.x}>
            <rect x={c.x} y={c.high} width="1" height={Math.max(c.low - c.high, 1)} fill="#737375" />
            <rect x={c.x - 1} y={c.top} width="3" height={Math.max(c.bottom - c.top, 1)} fill={c.up ? '#225437' : '#5b1a13'} />
            {c.bottom - c.top > 2 && (
              <rect x={c.x} y={c.top + 1} width="1" height={c.bottom - c.top - 2} fill={c.up ? '#6ba583' : '#e0513d'} />
            )}
          </g>
        ))}
        <path d="M106 584.500H1493" stroke="#d75442" strokeDasharray="2 1" />
        <path d="M104.500 135V741M1493.500 135V741M56 714.500H1550" stroke="#555" />
        {PRICES.map((p) => (
          <path key={p.y} d={`M1494 ${p.y + 0.5}h4`} stroke="#555" />
        ))}
        {YEARS.map((t) => (
          <path key={t.year} d={`M${t.x + 0.5} 715v3`} stroke="#555" />
        ))}
        <rect x="1493" y="575" width="51" height="18" fill="#d75442" />
        <rect x="1496" y="594" width="48" height="18" fill="#d75442" />
        <path d="M1494 584.500h4" stroke="#fff" />
      </g>
      <g fontSize="11" fill="#555">
        {PRICES.map((p) => (
          <text key={p.y} x="1501" y={p.y + 4}>{p.label}</text>
        ))}
        <text x="1501" y="588" fill="#fff">0.0194</text>
        <text x="1499" y="607" fill="#fff">2d 11h</text>
      </g>
      <g fontSize="12" fontWeight="600" fill="#555" textAnchor="middle">
        {YEARS.map((t) => (
          <text key={t.year} x={t.x} y="734">{t.year}</text>
        ))}
      </g>
      <g fontSize="10" fill="#555" textAnchor="middle">
        <circle cx="80" cy="729" r="9.500" fill="#f0f1f5" />
        <text x="80" y="733">Z</text>
        <circle cx="1521" cy="729" r="9.500" fill="#f0f1f5" />
        <text x="1521" y="733">A</text>
      </g>
    </svg>
  );
}

const QUOTES = [
  ['O', '0.0274'],
  ['H', '0.0274'],
  ['L', '0.0194'],
  ['C', '0.0194'],
];

function ChartLegend() {
  return (
    <div className="absolute inset-x-0 top-1.5 flex items-center pr-[63px] pl-[58px]">
      <h1 className="text-[15px] leading-6 text-[#555]">SB1!/ZW1! · 1M · ICEUS</h1>
      <div className="ml-4 flex gap-2.5 text-xs text-[#5b1a13]">
        {QUOTES.map(([k, v]) => (
          <span key={k}><span className="text-[#555]">{k}</span>{v}</span>
        ))}
        <span>−0.0075 (−27.85%)</span>
      </div>
      <div className="ml-auto flex items-center gap-1 text-xs">
        <Icon size={16} className="text-[#f7903a]"><circle cx="8" cy="8" r="7" strokeWidth="1.300" /><path d="M8 4v5M8 10.500V12" strokeWidth="1.500" /></Icon>
        <span className="text-[#9598a1]"><span className="text-[#6a6d78]">●</span> Market Closed</span>
        <span className="text-[#9c27b0]">End of Day</span>
      </div>
    </div>
  );
}

function RangeBar() {
  return (
    <div className="flex h-[39px] shrink-0 items-center rounded-b border-t border-[#e0e3eb] bg-white px-3 text-[13px]">
      <div className="flex gap-3.5 pl-1">
        <button>YTD</button>
        <button>1Y</button>
        <button>5Y</button>
        <button>All</button>
      </div>
      <div className="mx-4 h-5 w-px bg-[#e0e3eb]" />
      <button className="text-sm">Go to...</button>
      <button className="ml-auto text-sm">06:30:52 (UTC)</button>
      <div className="mx-4 h-5 w-px bg-[#e0e3eb]" />
      <div className="flex gap-4">
        <button>%</button>
        <button>log</button>
        <button className="text-[#2196f3]">auto</button>
      </div>
    </div>
  );
}

const BOTTOM_TABS = ['Text Notes', 'Pine Editor', 'Strategy Tester', 'Trading Panel'];

function BottomTabs() {
  return (
    <div className="mt-1 mb-px flex h-[38px] shrink-0 items-stretch rounded-t bg-white text-sm">
      <button className="flex items-center gap-1 border-r border-[#e0e3eb] pl-4">
        Stock Screener
        <Icon size={16}><path d="M4.500 6.500L8 10l3.500-3.500" /></Icon>
      </button>
      {BOTTOM_TABS.map((label) => (
        <button key={label} className="border-r border-[#e0e3eb] px-4">{label}</button>
      ))}
      <div className="ml-auto flex items-center gap-4 pr-[15px]">
        <button aria-label="Expand"><Icon size={20}><path d="M1.500 14L10 6l8.500 8" strokeWidth="1.200" /></Icon></button>
        <button aria-label="Maximize panel"><Icon size={20}><path d="M1.500 4.500a2 2 0 012-2h13a2 2 0 012 2v11a2 2 0 01-2 2h-13a2 2 0 01-2-2zM1.500 6h17" strokeWidth="1.300" /></Icon></button>
      </div>
    </div>
  );
}

/* ---------- find bar and taskbar ---------- */

function FindBar() {
  const [query, setQuery] = useState('fees');

  return (
    <div className="flex h-[37px] shrink-0 items-center border-t border-[#a8a8ac] bg-[#f9f9fa] px-2 text-xs text-[#0c0c0d]">
      <label htmlFor="find" className="sr-only">Find in page</label>
      <input
        id="find"
        value={query}
        onChange={(e) => setQuery(e.target.value)}
        className="h-[22px] w-[168px] rounded-l-xs border border-[#a0a0a4] bg-white px-1 outline-none"
      />
      <button aria-label="Previous match" className="flex h-[22px] w-[27px] items-center justify-center border-y border-r border-[#a0a0a4]">
        <Icon size={14}><path d="M2 9.500L7 4.500l5 5" strokeWidth="2" /></Icon>
      </button>
      <button aria-label="Next match" className="flex h-[22px] w-[27px] items-center justify-center rounded-r-xs border-y border-r border-[#a0a0a4]">
        <Icon size={14}><path d="M2 4.500l5 5 5-5" strokeWidth="2" /></Icon>
      </button>
      <div className="ml-[11px] flex gap-3.5">
        <button>Highlight <u>A</u>ll</button>
        <button>Match <u>C</u>ase</button>
        <button>Match D<u>i</u>acritics</button>
        <button><u>W</u>hole Words</button>
        <span className="text-[#737378]">8 of 66 matches</span>
      </div>
      <button aria-label="Close find bar" className="mr-1 ml-auto"><Icon size={12}><path d="M2 2l8 8M10 2l-8 8" strokeWidth="2" /></Icon></button>
    </div>
  );
}

const FirefoxIcon = () => (
  <Icon size={24}>
    <circle cx="12" cy="13" r="10.500" fill="#ff5a2b" stroke="none" />
    <path d="M17 2c5 3 7 9 5 14-2 5-7 7-11 7 5-2 8-6 8-11 0-4-3-6-2-10z" fill="#ffcf3a" stroke="none" />
    <path d="M2 9c0-3 2-5 3-6 0 2 3 2 5 3L7 9z" fill="#ff8a1e" stroke="none" />
    <circle cx="12" cy="13" r="5" fill="#6b3fd0" stroke="none" />
    <path d="M7 9c3-1 5 0 6 1-2 0-3 1-5 1z" fill="#ffa436" stroke="none" />
  </Icon>
);

const PokerIcon = () => (
  <Icon size={24}>
    <path d="M12 0c2 5 10 9 10 15 0 5-6 5.500-8.500 2.500 0 3 1 4 2 6.500h-7c1-2.500 2-3.500 2-6.500C8 20.500 2 20 2 15 2 9 10 5 12 0z" fill="#e01f26" stroke="none" />
    <path d="M12 8l1.300 3h3l-2.400 2 1 3.200L12 14.400 9.100 16.200l1-3.200-2.400-2h3z" fill="#fff" stroke="none" />
  </Icon>
);

const HoldemIcon = () => (
  <span className="relative flex size-6 shrink-0 items-center justify-center">
    <Icon size={24} className="absolute"><path d="M12 0l10 5v13l-10 6-10-6V5z" fill="#f4692a" stroke="none" /></Icon>
    <span className="relative text-sm font-bold text-white">2</span>
  </span>
);

const MailIcon = () => (
  <span className="relative size-6 shrink-0">
    <Icon size={24}><path d="M0 8l12-6 12 6v11H0z" fill="#fff" stroke="none" /><path d="M1 8l11 5 11-5z" fill="#16252b" stroke="none" /></Icon>
    <span className="absolute right-0 -bottom-1 flex size-4 items-center justify-center rounded-full border border-[#999] bg-[#44484b] text-[10px] text-white">2</span>
  </span>
);

const WINDOWS = [
  { title: 'SB1!/ZW1! 0.02 ▼ –...', icon: <FirefoxIcon />, active: true },
  { title: 'PokerStars Lobby - ...', icon: <PokerIcon /> },
  { title: "Hold'em Manager ...", icon: <HoldemIcon /> },
  { title: 'Indbakke - Live - M...', icon: <MailIcon /> },
];

function Taskbar() {
  return (
    <footer className="flex h-10 shrink-0 items-stretch bg-linear-to-r from-[#15252c] via-[#15211f] to-[#11191a] text-xs text-white">
      <div className="flex items-center">
        <button aria-label="Start" className="flex w-12 justify-center">
          <Icon size={16}><path d="M0 2.500l7-1v6H0zM8 1.300L16 0v7.500H8zM0 8.500h7v6l-7-1zM8 8.500h8V16l-8-1.300z" fill="#fff" stroke="none" /></Icon>
        </button>
        <button aria-label="Search" className="flex w-12 justify-center">
          <Icon size={18}><circle cx="11" cy="6.500" r="5" strokeWidth="1.500" /><path d="M7.500 10.500L1 17" strokeWidth="1.500" /></Icon>
        </button>
        <button aria-label="File Explorer" className="flex w-[51px] justify-center">
          <Icon size={22}><path d="M0 2h8l2 2h12v16H0z" fill="#f0bd4a" stroke="none" /><path d="M0 6h22v14H0z" fill="#fde28a" stroke="none" /><path d="M4 20v-8h14v8h-4v-4H8v4z" fill="#35a6e6" stroke="none" /></Icon>
        </button>
        <button aria-label="Store" className="flex w-12 justify-center">
          <Icon size={24}><path d="M0 7h24v14a2 2 0 01-2 2H2a2 2 0 01-2-2z" fill="#fff" stroke="none" /><path d="M8 7V4a4 4 0 018 0v3" stroke="#fff" strokeWidth="1.500" /><path d="M6 9.500h5.500v5.500H6z" fill="#f25022" stroke="none" /><path d="M12.500 9.500H18v5.500h-5.500z" fill="#7fba00" stroke="none" /><path d="M6 16h5.500v5H6z" fill="#00a4ef" stroke="none" /><path d="M12.500 16H18v5h-5.500z" fill="#ffb900" stroke="none" /></Icon>
        </button>
        <button aria-label="Chrome" className="flex w-[52px] justify-center">
          <Icon size={22}><circle cx="11" cy="11" r="11" fill="#dd4b3e" stroke="none" /><path d="M1.500 5.500L7 14l4 8A11 11 0 011.500 5.500z" fill="#1da462" stroke="none" /><path d="M11 22l5-8.500V6h4.800A11 11 0 0111 22z" fill="#ffcd46" stroke="none" /><circle cx="11" cy="11" r="5" fill="#4c8bf5" stroke="#fff" strokeWidth="1.200" /></Icon>
        </button>
        <button aria-label="VLC" className="flex w-12 justify-center">
          <Icon size={22}><path d="M10 0h2l6 17H4z" fill="#f98a10" stroke="none" /><path d="M8.700 4h4.600l1.400 4H7.300zM6.300 11h9.400l1 3H5.300z" fill="#eee" stroke="none" /><path d="M2 16h18l2 6H0z" fill="#e87400" stroke="none" /></Icon>
        </button>
      </div>
      <div className="ml-1 flex min-w-0 gap-2">
        {WINDOWS.map((w) => (
          <button
            key={w.title}
            className={`flex items-center gap-1 border-b-2 border-[#76b9ed] whitespace-nowrap ${
              w.active ? '-mr-[3px] -ml-1 w-40 bg-[#434f55] pl-2.5' : 'w-[153px] pl-1.5'
            }`}
          >
            {w.icon}
            {w.title}
          </button>
        ))}
      </div>
      <div className="ml-auto flex items-center">
        <button aria-label="Show hidden icons" className="mr-1.5"><Icon size={16}><path d="M2 10.500L8 5l6 5.500" strokeWidth="1.300" /></Icon></button>
        <Icon size={18}><path d="M2.500 3.500l12-2v14l-12-2z" /><path d="M5 9c0-4 5-4 6-1M11 5v3H8M5.500 11c1 1 3 1 4 0" /><circle cx="13" cy="12" r="5" fill="#d9252b" stroke="none" /><path d="M13 9v4M13 14v1" strokeWidth="1.500" /></Icon>
        <Icon size={18} className="ml-1.5"><path d="M6 6.500h10v7H6zM16 8.500h1.500v3H16M2.500 2v3M5.500 2v3M1.500 5h5v3h-5zM4 8v4h2" /><path d="M8 8.500h6v3H8z" fill="currentColor" stroke="none" /></Icon>
        <span className="ml-2">DAN</span>
        <div className="ml-2.5 text-center leading-[18px]">
          <div>08:29</div>
          <div>29-03-2020</div>
        </div>
        <button aria-label="Notifications" className="mr-[18px] ml-4"><Icon size={18}><path d="M1.500 2.500h15v11h-5L9 16.500l-2-3H1.500z" strokeWidth="1.300" /></Icon></button>
        <div className="mr-1 h-full w-px bg-[#56605f]" />
      </div>
    </footer>
  );
}

export default function App() {
  return (
    <div className="flex h-screen flex-col overflow-hidden bg-[#f9f9fa] font-['Open_Sans',sans-serif] text-[#131722]">
      <TabBar />
      <NavBar />
      <BookmarksBar />
      <main className="flex min-h-0 flex-1 bg-[#e0e3eb]">
        <LeftSidebar />
        <div className="mr-[5px] ml-1 flex min-w-0 flex-1 flex-col">
          <ChartToolbar />
          <section className="relative min-h-0 flex-1 bg-white">
            <ChartLegend />
            <PriceChart />
          </section>
          <RangeBar />
          <BottomTabs />
        </div>
        <RightSidebar />
      </main>
      <FindBar />
      <Taskbar />
    </div>
  );
}
